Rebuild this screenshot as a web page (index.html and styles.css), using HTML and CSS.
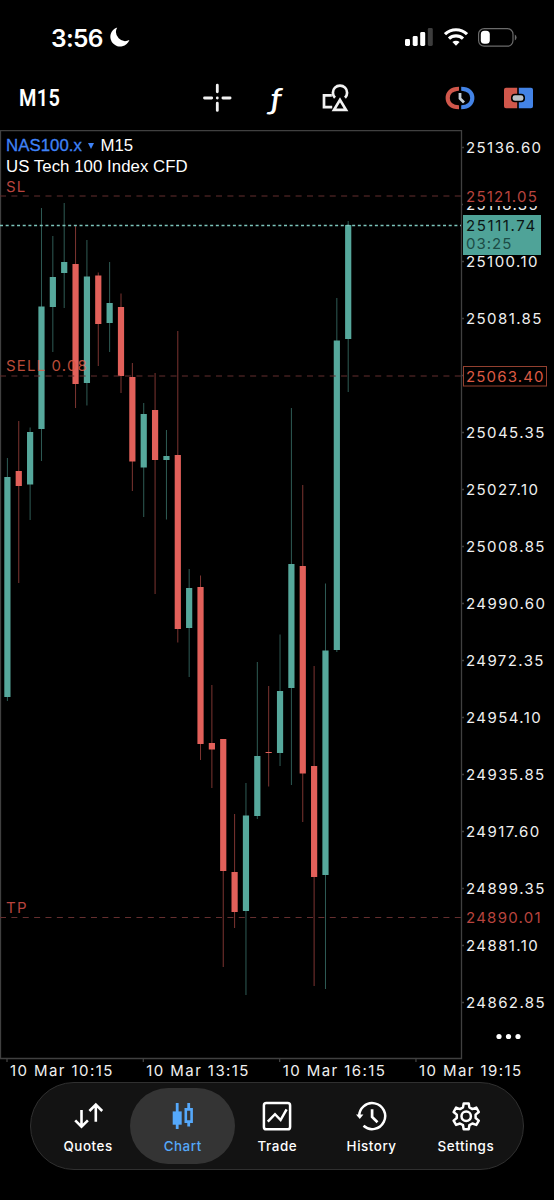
FILE: index.html
```html
<!DOCTYPE html>
<html lang="en">
<head>
    <meta charset="UTF-8">
    <meta name="viewport" content="width=device-width, initial-scale=1.0">
    <title>NAS100.x M15</title>
    <link rel="stylesheet" href="styles.css">
</head>
<body>
    <header class="status-bar">
        <div class="clock">
            <span class="time">3:56</span>
            <svg width="20" height="20" viewBox="0 0 20 20"><path fill="#fff" d="M7.2 0.4A9.8 9.8 0 1 0 19.4 13 A9.2 9.2 0 0 1 7.2 0.4Z"/></svg>
        </div>
        <div class="status-icons">
            <svg width="28" height="18" viewBox="0 0 28 18" fill="#fff">
                <rect x="0" y="11" width="5" height="7" rx="1.4"/>
                <rect x="7.7" y="8" width="5" height="10" rx="1.4"/>
                <rect x="15.2" y="4" width="5" height="14" rx="1.4"/>
                <rect x="22.8" y="0" width="5" height="18" rx="1.4" fill="#3d3d3d"/>
            </svg>
            <svg width="24" height="18" viewBox="0 0 24 18" fill="none" stroke="#fff" stroke-width="3.1">
                <path d="M1 6.2a15.8 15.8 0 0 1 22 0"/>
                <path d="M5 10.7a10 10 0 0 1 14 0"/>
                <path d="M12 17.8l-3.6-3.7a5.2 5.2 0 0 1 7.2 0z" fill="#fff" stroke="none"/>
            </svg>
            <svg width="40" height="19" viewBox="0 0 40 19">
                <rect x="0.6" y="0.6" width="34.4" height="17.6" rx="5.6" fill="none" stroke="#6b6b6b" stroke-width="1.2"/>
                <rect x="2.8" y="2.8" width="9" height="13" rx="3.6" fill="#fff"/>
                <path d="M36.8 6.4q1.8 1 1.8 3t-1.8 3z" fill="#6b6b6b"/>
            </svg>
        </div>
    </header>

    <nav class="toolbar">
        <span class="timeframe">M15</span>
        <div class="tools">
            <svg width="30" height="30" viewBox="0 0 30 30" stroke="#f2f2f2" stroke-width="2.8" stroke-linecap="round">
                <path d="M15.3 2.2v6.6M15.3 20.2v7.2M2.5 15h7.2M20.9 15h7.200M15.300 15h.01"/>
            </svg>
            <span class="fx">ƒ</span>
            <svg width="30" height="30" viewBox="0 0 30 30" fill="none" stroke="#f2f2f2" stroke-width="2.7">
                <path d="M15 14.7A7.1 7.1 0 1 1 25 14.7"/>
                <path d="M11.8 12.4H4v11.700h8.200"/>
                <path d="M20 16.900l6 10H14z"/>
            </svg>
        </div>
        <div class="panels">
            <svg width="30" height="26" viewBox="0 0 30 26" fill="none">
                <path d="M14 3.800C6 3.800 2.700 8 2.700 13s3.300 9.200 11.300 9.200" stroke="#d0574b" stroke-width="4.200"/>
                <path d="M16.200 3.800C23.800 3.800 27.300 8 27.300 13s-3.500 9.200-11.100 9.200" stroke="#4383e6" stroke-width="4.200"/>
                <circle cx="15" cy="13" r="7.600" fill="#000"/>
                <path d="M15 8v5.400l4 4" stroke="#c3ccd4" stroke-width="2.800"/>
            </svg>
            <svg width="30" height="22" viewBox="0 0 30 22">
                <path d="M3 .8h11.200v20.400H3a2 2 0 0 1-2-2V2.800a2 2 0 0 1 2-2z" fill="#d0574b"/>
                <path d="M15.800.8H28a2 2 0 0 1 2 2v16.400a2 2 0 0 1-2 2H15.800z" fill="#4383e6"/>
                <rect x="8" y="6.7" width="14" height="8.6" rx="3.8" fill="#000"/>
                <rect x="9.6" y="8.2" width="10.8" height="5.6" rx="2.4" fill="#b9c0c6"/>
            </svg>
        </div>
    </nav>

    <main class="chart">
        <svg id="chart" class="plot" width="554" height="952" viewBox="0 130 554 952"></svg>
        <div class="legend">
            <p><span class="symbol">NAS100.x</span> <span class="arrow"></span> M15</p>
            <p>US Tech 100 Index CFD</p>
        </div>
    </main>

    <nav class="tabs">
        <a class="tab">
            <svg width="32" height="32" viewBox="0 0 32 32" fill="none" stroke="#fff" stroke-width="2.6">
                <path d="M9.500 10v16.500M3.200 20.300l6.300 6.400 6.400-6.400M23.800 21.700V4.600M17.400 11l6.400-6.400L30.200 11"/>
            </svg>
            <span>Quotes</span>
        </a>
        <a class="tab active">
            <svg width="32" height="32" viewBox="0 0 32 32" stroke="#55a8fa" stroke-width="2.8">
                <path d="M10.200 3v26M21.700 3v6M21.700 22v4.400" fill="none"/>
                <path d="M5.700 11.400h9v13.300h-9z" fill="#55a8fa" stroke="none"/>
                <path d="M18.800 9.400h5.800v12.200h-5.800z" fill="none" stroke-width="2.6"/>
            </svg>
            <span>Chart</span>
        </a>
        <a class="tab">
            <svg width="32" height="32" viewBox="0 0 32 32" fill="none" stroke="#fff" stroke-width="2.5">
                <rect x="2.9" y="3.1" width="26.2" height="26.2" rx="2.4"/>
                <path d="M6.800 21.600l7.200-7.400 5.600 5.800 6-10.600"/>
            </svg>
            <span>Trade</span>
        </a>
        <a class="tab">
            <svg width="32" height="32" viewBox="-0.500 0 32 32" fill="none" stroke="#fff" stroke-width="2.5">
                <path d="M2.700 17A13 13 0 1 1 7 25.800"/>
                <path d="M15.600 9.200v7.800l5.400 5.200" stroke-width="2.7"/>
                <path d="M-.5 14.600h7.400l-3.600 4.400z" fill="#fff" stroke="none"/>
            </svg>
            <span>History</span>
        </a>
        <a class="tab">
            <svg width="32" height="32" viewBox="0 0 32 32" fill="none" stroke="#fff" stroke-width="2.5" stroke-linejoin="round">
                <path d="M13.700 3.400h5l.7 4 3 1.700 3.900-1.500 2.500 4.400-3.200 2.600v3.400l3.200 2.600-2.500 4.300-3.900-1.400-3 1.700-.7 4h-5l-.7-4-3-1.700-3.900 1.400-2.500-4.300L6.800 18v-3.400L3.600 12l2.500-4.400L10 9.100l3-1.700z"/>
                <circle cx="16.2" cy="16.3" r="4.7"/>
            </svg>
            <span>Settings</span>
        </a>
    </nav>

    <script src="chart.js"></script>
</body>
</html>
```

FILE: styles.css
```css
:root {
    --up: #56a89c;
    --down: #e2605a;
    --frame: #404040;
    --level: #b8443e;
    --accent: #55a8fa;
}

* {
    margin: 0;
    padding: 0;
    box-sizing: border-box;
}

body {
    width: 554px;
    height: 1200px;
    display: flex;
    flex-direction: column;
    overflow: hidden;
    background-color: #000;
    color: #fff;
    font-family: Inter, "Liberation Sans", sans-serif;
}

svg {
    display: block;
    flex: none;
}

/* Status bar */
.status-bar {
    height: 66px;
    padding: 8px 36px 0 51px;
    display: flex;
    justify-content: space-between;
    align-items: center;
}

.clock {
    display: flex;
    align-items: center;
    gap: 7px;
}

.time {
    font-size: 24.5px;
    font-weight: 600;
    line-height: 28px;
    letter-spacing: -0.7px;
    padding-top: 2px;
}

.status-icons {
    display: flex;
    align-items: center;
    gap: 10.5px;
}

/* Toolbar */
.toolbar {
    height: 64px;
    padding: 0 21px 0 19px;
    display: flex;
    align-items: center;
}

.timeframe {
    width: 183px;
    font-family: Roboto, sans-serif;
    font-size: 24px;
    font-weight: 600;
    letter-spacing: 0.4px;
    transform: scaleX(0.83);
    transform-origin: left;
}

.tools {
    display: flex;
    align-items: center;
    gap: 29px;
}

.fx {
    width: 30px;
    text-align: center;
    font-family: Lato, sans-serif;
    font-size: 28px;
    font-style: italic;
    font-weight: 600;
    line-height: 30px;
    transform: scaleX(1.2);
}

.panels {
    margin-left: auto;
    display: flex;
    align-items: center;
    gap: 28px;
}

/* Chart */
.chart {
    position: relative;
    height: 952px;
}

.legend {
    position: absolute;
    left: 6px;
    top: 5px;
    font-family: "Liberation Sans", sans-serif;
    font-size: 16.8px;
    line-height: 21px;
    letter-spacing: 0.05px;
}

.symbol {
    color: #3f83f7;
    -webkit-text-stroke: 0.3px #3f83f7;
}

.arrow {
    display: inline-block;
    margin: 0 2px 2px 1px;
    border: 3.5px solid transparent;
    border-top: 6px solid #3f83f7;
    border-bottom: 0;
}

.plot text {
    font-size: 15px;
    letter-spacing: 1.42px;
    fill: #f0f0f0;
}

.frame {
    fill: none;
    stroke: var(--frame);
    stroke-width: 1.3;
}

.wick {
    stroke-width: 1;
    opacity: 0.55;
}

.up {
    fill: var(--up);
    stroke: var(--up);
}

.down {
    fill: var(--down);
    stroke: var(--down);
}

.body {
    stroke: none;
}

.level {
    stroke: #652f2f;
    stroke-dasharray: 6 5.37;
}

.bid {
    stroke: #7cc4bb;
    stroke-width: 1.3;
    stroke-dasharray: 3 2.68;
}

.cover {
    fill: #000;
}

.plot .level-text {
    fill: var(--level);
    letter-spacing: 1.25px;
}

.plot .sell-text {
    fill: #dc5a43;
    letter-spacing: 1.15px;
}

.sell-box {
    fill: #000;
    stroke: #93402f;
}

.bid-box {
    fill: #4fa398;
}

.plot .bid-price {
    fill: #0b1514;
    letter-spacing: 1.6px;
}

.plot .bid-timer {
    fill: #1c4c46;
    letter-spacing: 1px;
}

.more {
    fill: #fff;
}

/* Bottom tabs */
.tabs {
    width: 494px;
    height: 88px;
    margin: 0 auto;
    padding: 0 10px;
    display: flex;
    align-items: center;
    border: 1px solid #303030;
    border-radius: 44px;
    background-color: #131313;
}

.tab {
    flex: 1;
    height: 76px;
    padding-top: 12px;
    display: flex;
    flex-direction: column;
    align-items: center;
    gap: 6px;
    font-size: 13.4px;
    font-weight: 500;
    line-height: 16px;
    letter-spacing: 0.55px;
}

.tab.active {
    margin: 0 -5px;
    flex: 0 0 105px;
    border-radius: 38px;
    background-color: #343434;
    color: var(--accent);
}
```

FILE: chart.js
```js
// x step between candles and the first centre
const STEP = 11.36;
const START = 7.4;

// [direction, high, open/close top, open/close bottom, low] in chart units
const candles = [
    ['up', 458, 477, 697, 701],
    ['down', 421, 471, 486, 583],
    ['up', 427.5, 432, 484.5, 520],
    ['up', 208, 306.5, 429, 461],
    ['up', 236, 277, 307, 352],
    ['up', 203, 262, 273, 308],
    ['down', 226, 264, 384, 408],
    ['up', 240, 276.5, 383, 405.5],
    ['down', 272.5, 275.5, 324, 366],
    ['up', 262, 303, 323, 352],
    ['down', 293.5, 307, 376, 393],
    ['down', 363, 377, 461.5, 491],
    ['up', 403, 414, 467.5, 517],
    ['down', 373, 410, 460, 594],
    ['up', 430, 456, 460, 519.5],
    ['down', 331, 455, 629, 642.5],
    ['up', 569, 588, 628, 677],
    ['down', 575.5, 587, 744, 760],
    ['down', 685, 743, 749.5, 788],
    ['down', 739, 739, 871, 967],
    ['down', 814, 872, 912, 928],
    ['up', 783, 815.5, 911, 995],
    ['up', 662, 756, 816, 819],
    ['down', 686, 752, 753, 786.5],
    ['up', 634.5, 691, 753, 766],
    ['up', 408, 564, 688, 785],
    ['down', 485, 566, 773.5, 822],
    ['down', 666, 766, 877, 986],
    ['up', 583.5, 650.5, 875, 989],
    ['up', 298, 340.5, 650, 652],
    ['up', 221, 225, 339, 392]
];

const times = ['10 Mar 10:15', '10 Mar 13:15', '10 Mar 16:15', '10 Mar 19:15'];

const chart = document.getElementById('chart');

function add(tag, attrs, text) {
    const el = document.createElementNS('http://www.w3.org/2000/svg', tag);
    for (const key in attrs) {
        el.setAttribute(key, attrs[key]);
    }
    if (text) {
        el.textContent = text;
    }
    chart.appendChild(el);
}

function hline(y, cls) {
    add('line', { x1: 0, x2: 461, y1: y, y2: y, class: cls });
}

// Frame
add('path', { d: 'M.5 1058.5V130.5H461.5V1058.5H0', class: 'frame' });

// Candles
candles.forEach(([dir, high, top, bottom, low], i) => {
    const x = START + i * STEP;
    add('line', { x1: x, x2: x, y1: high, y2: low, class: 'wick ' + dir });
    add('rect', { x: x - 3.1, y: top, width: 6.2, height: bottom - top, class: dir + ' body' });
});

// Price levels
hline(196, 'level');
hline(376, 'level');
hline(917.5, 'level');
hline(225.5, 'bid');
add('text', { x: 6, y: 191.5, class: 'level-text' }, 'SL');
add('text', { x: 6, y: 371.3, class: 'sell-text', opacity: 0.85 }, 'SELL 0.08');
add('text', { x: 6, y: 912.5, class: 'level-text' }, 'TP');

// Price scale
for (let i = 0; i < 16; i++) {
    const y = 153 + i * 57;
    add('line', { x1: 462, x2: 464, y1: y - 5.5, y2: y - 5.5, class: 'frame' });
    if (i !== 4) {
        add('text', { x: 466, y: y }, (25136.6 - i * 18.25).toFixed(2));
    }
}

add('rect', { x: 463, y: 187, width: 84, height: 19, class: 'cover' });
add('text', { x: 466, y: 201.5, class: 'level-text' }, '25121.05');
add('rect', { x: 463, y: 215, width: 78, height: 40, class: 'bid-box' });
add('text', { x: 466, y: 231, class: 'bid-price' }, '25111.74');
add('text', { x: 466, y: 249, class: 'bid-timer' }, '03:25');
add('rect', { x: 463.5, y: 366.5, width: 83, height: 19.5, class: 'sell-box' });
add('text', { x: 466, y: 381.5, class: 'sell-text' }, '25063.40');
add('text', { x: 466, y: 922.5, class: 'level-text' }, '24890.01');

// Time scale
times.forEach((label, i) => {
    const x = 7 + i * STEP * 12;
    add('line', { x1: x, x2: x, y1: 1059, y2: 1062, class: 'frame' });
    add('text', { x: x + 3, y: 1076 }, label);
});

// More menu
[499, 508.5, 518].forEach(x => add('circle', { cx: x, cy: 1036.5, r: 2.6, class: 'more' }));
```
